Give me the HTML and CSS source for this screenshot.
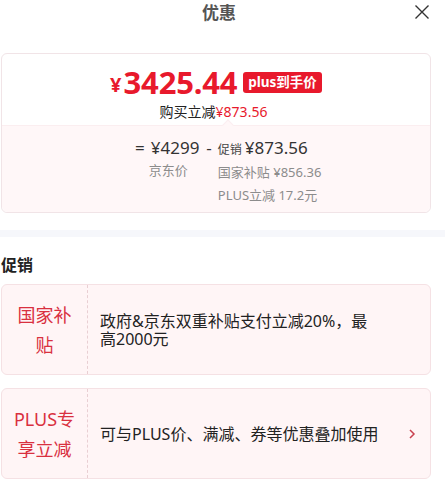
FILE: index.html
```html
<!DOCTYPE html>
<html lang="zh">
<head>
<meta charset="utf-8">
<link rel="stylesheet" href="styles.css">
</head>
<body>
<div class="page">
  <header class="head">
    <div class="title">优惠</div>
    <svg class="close" width="16" height="16" viewBox="0 0 16 16"><path d="M1.5 1.5 L14.5 14.5 M14.5 1.5 L1.5 14.5" stroke="#333" stroke-width="1.4" fill="none"/></svg>
  </header>

  <section class="price-card">
    <div class="price-top">
      <div class="price-line">
        <span class="yen">¥</span><span class="big">3425.44</span><span class="badge">plus到手价</span>
      </div>
      <div class="save">购买立减<span class="red">¥873.56</span></div>
    </div>
    <div class="price-bottom">
      <span class="notch"></span>
      <div class="calc">
        <div class="op">=</div>
        <div class="col">
          <div class="num">¥4299</div>
          <div class="lbl lbl-c">京东价</div>
        </div>
        <div class="op minus">-</div>
        <div class="col">
          <div class="num"><span class="small">促销</span>¥873.56</div>
          <div class="lbl">国家补贴 ¥856.36</div>
          <div class="lbl">PLUS立减 17.2元</div>
        </div>
      </div>
    </div>
  </section>

  <div class="band"></div>

  <h2 class="sec-title">促销</h2>

  <div class="promo">
    <div class="promo-tag">国家补<br>贴</div>
    <div class="promo-text">政府&amp;京东双重补贴支付立减20%，最高2000元</div>
  </div>

  <div class="promo">
    <div class="promo-tag">PLUS专<br>享立减</div>
    <div class="promo-text">可与PLUS价、满减、券等优惠叠加使用</div>
    <svg class="chev" width="8" height="12" viewBox="0 0 8 12"><path d="M2 2 L6 6 L2 10" stroke="#c9414f" stroke-width="1.5" fill="none"/></svg>
  </div>
</div>
</body>
</html>
```

FILE: styles.css
```css
* { box-sizing: border-box; }
html, body { margin: 0; padding: 0; background: #fff; }
body {
  font-family: "Noto Sans", "Noto Sans CJK SC", sans-serif;
  color: #222;
  width: 445px;
  overflow: hidden;
}
.page { width: 445px; }

.head {
  position: relative;
  height: 26px;
  display: flex;
  justify-content: center;
  align-items: center;
}
.title {
  font-size: 17px;
  font-weight: 700;
  color: #555;
  line-height: 24px;
  margin-left: -7px;
}
.close { position: absolute; right: 15px; top: 4px; }

.price-card {
  margin: 27px 0 0 1px;
  width: 430px;
  border: 1px solid #f1e4e7;
  border-radius: 6px;
  background: #fff;
}
.price-top {
  height: 71px;
  display: flex;
  flex-direction: column;
  align-items: center;
  padding-top: 12px;
}
.price-line {
  display: flex;
  align-items: center;
  height: 32px;
  line-height: 32px;
  color: #e8192c;
}
.yen { font-size: 20px; font-weight: 700; line-height: 20px; padding-top: 6px; margin-right: 2px; }
.big { font-size: 31px; font-weight: 700; letter-spacing: -0.2px; line-height: 32px; }
.badge {
  margin-left: 6px;
  background: #e8192c;
  color: #fff;
  font-size: 13.5px;
  font-weight: 700;
  border-radius: 3px;
  height: 21px;
  line-height: 21px;
  padding: 0 5px;
}
.save { font-size: 14px; color: #222; line-height: 18px; margin-top: 5px; margin-left: -5px; }
.red { color: #e8192c; }

.price-bottom {
  position: relative;
  background: #fff7f8;
  border-top: 1px solid #fbeef0;
  height: 87px;
  border-radius: 0 0 6px 6px;
  padding-top: 10px;
}
.notch {
  position: absolute;
  left: 222px;
  top: -5px;
  width: 8px;
  height: 8px;
  background: #fff7f8;
  border-left: 1px solid #fbeef0;
  border-top: 1px solid #fbeef0;
  transform: rotate(45deg);
}
.calc {
  display: flex;
  padding-left: 133px;
  color: #333;
}
.op { font-size: 17px; line-height: 23px; margin-right: 6px; }
.minus { margin: 0 6px 0 7px; }
.col { display: flex; flex-direction: column; }
.num { font-size: 17px; line-height: 23px; color: #333; }
.small { font-size: 12px; color: #444; margin-right: 3px; }
.lbl { font-size: 13px; line-height: 23px; color: #8c8c8c; }
.lbl-c { margin-left: -2px; }

.band { height: 7px; background: #f6f7fb; margin-top: 17px; }

.sec-title {
  margin: 17px 0 0 1px;
  font-size: 16px;
  font-weight: 700;
  line-height: 22px;
  color: #222;
}

.promo {
  margin: 8px 0 0 1px;
  width: 430px;
  height: 91px;
  display: flex;
  align-items: center;
  background: #fff5f6;
  border: 1px solid #f5e1e4;
  border-radius: 6px;
  position: relative;
}
.promo + .promo { margin-top: 13px; }
.promo-tag {
  width: 86px;
  height: 100%;
  flex: none;
  display: flex;
  align-items: center;
  justify-content: center;
  text-align: center;
  border-right: 1px dashed #e9cfd3;
  color: #d9303f;
  font-size: 18px;
  line-height: 30px;
}
.promo-text {
  padding-left: 12px;
  width: 293px;
  font-size: 16px;
  line-height: 18px;
  color: #222;
}
.chev { position: absolute; right: 14px; top: 39px; }
```
